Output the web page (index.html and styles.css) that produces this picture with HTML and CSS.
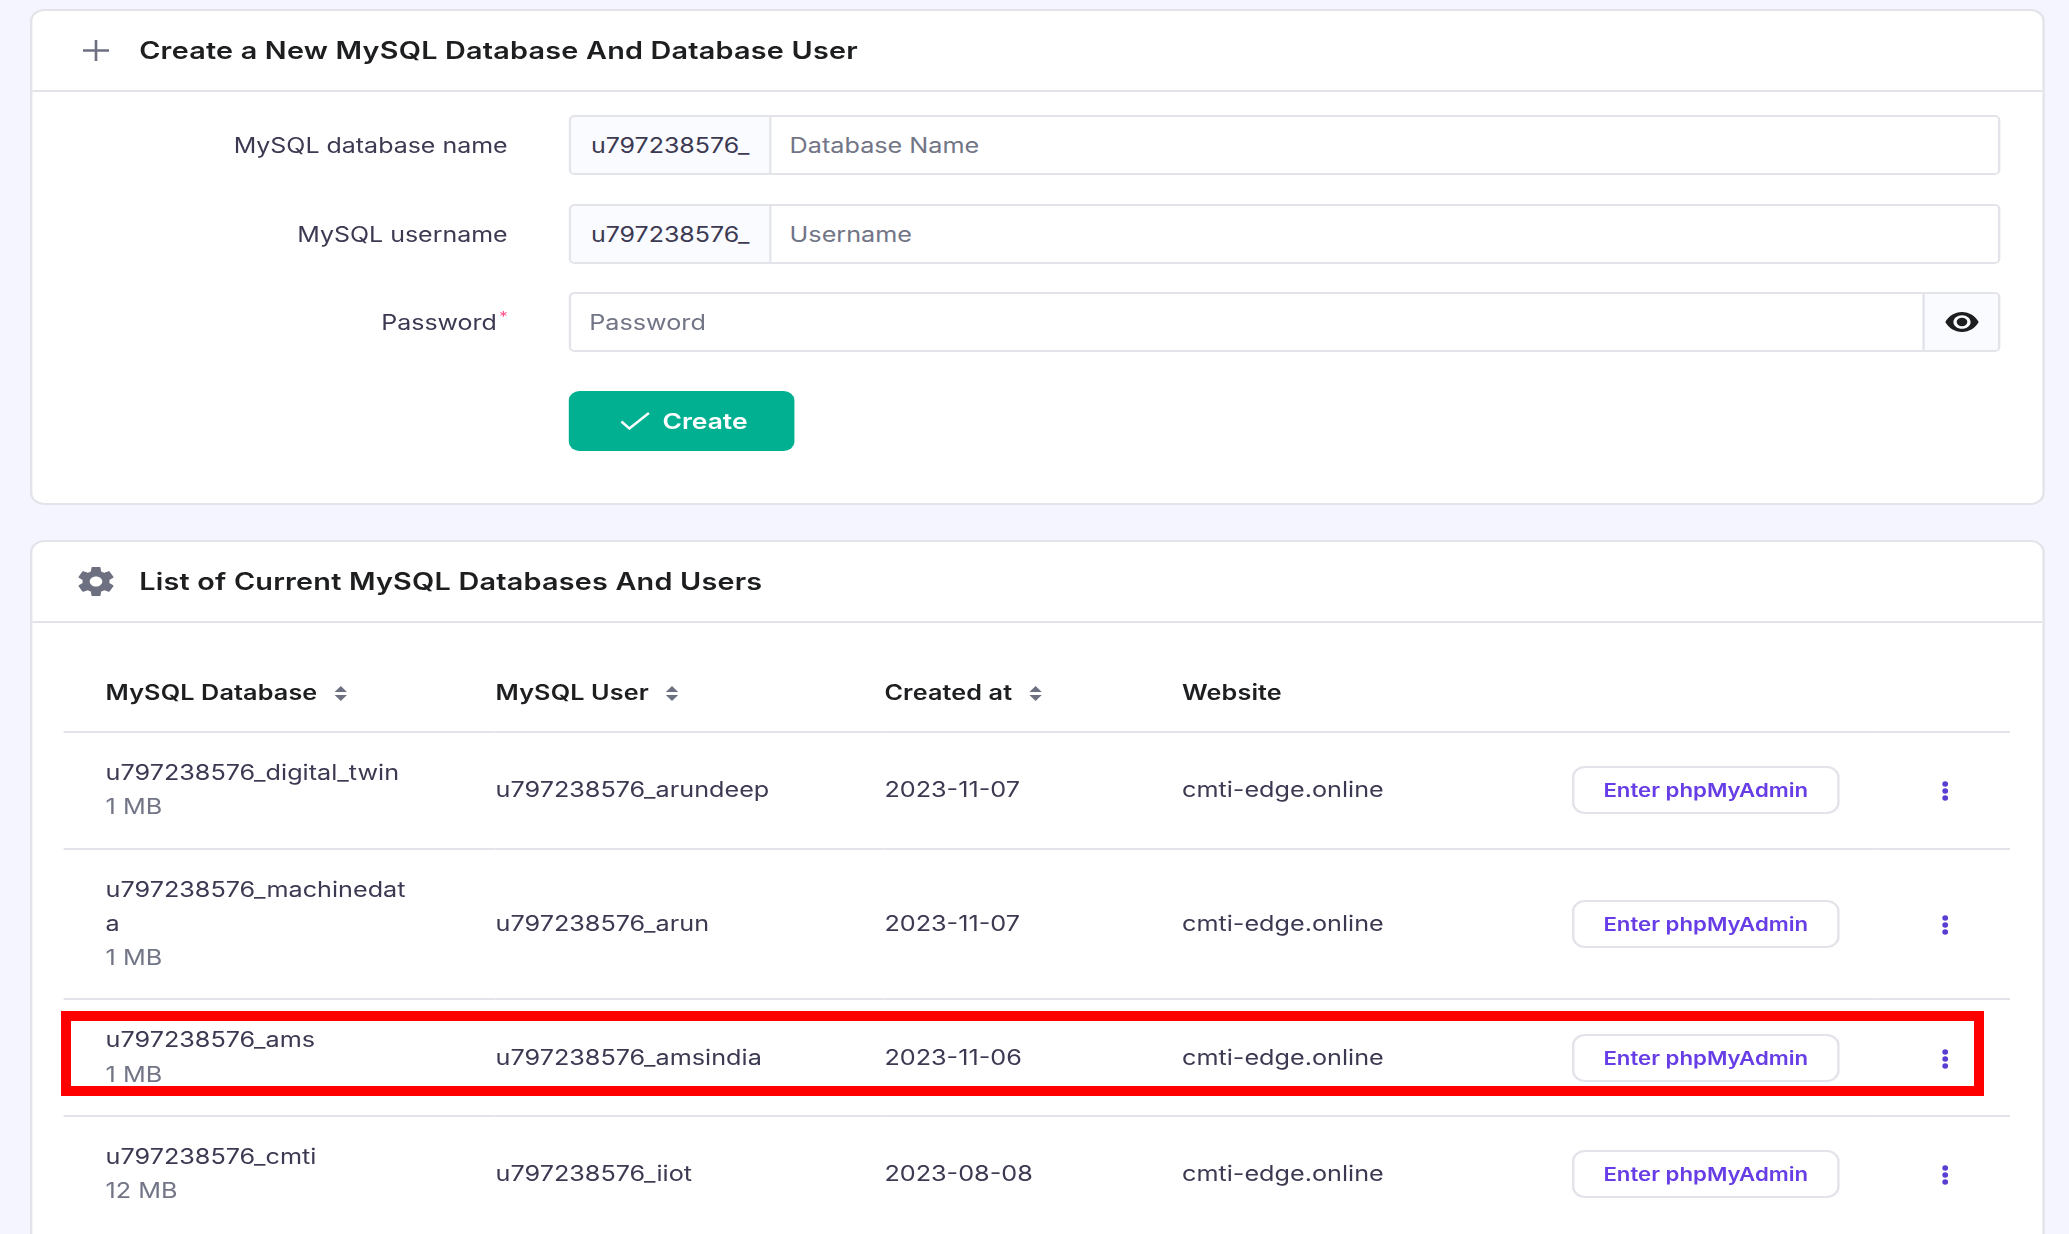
FILE: index.html
```html
<!DOCTYPE html>
<html lang="en">
<head>
    <meta charset="UTF-8">
    <title>MySQL Databases</title>
    <link rel="stylesheet" href="styles.css">
</head>
<body>
    <div class="page">
        <section class="card card-create">
            <header class="card-head">
                <span class="head-icon">
                    <svg width="22" height="21" viewBox="0 0 26 21" preserveAspectRatio="none"><path d="M0 10.5h26M13 0v21" stroke="#6d7081" stroke-width="2.6" fill="none"/></svg>
                </span>
                <h2>Create a New MySQL Database And Database User</h2>
            </header>
            <div class="form">
                <div class="form-row">
                    <label>MySQL database name</label>
                    <div class="field">
                        <span class="addon">u797238576_</span>
                        <input type="text" placeholder="Database Name">
                    </div>
                </div>
                <div class="form-row form-row-tight">
                    <label>MySQL username</label>
                    <div class="field">
                        <span class="addon">u797238576_</span>
                        <input type="text" placeholder="Username">
                    </div>
                </div>
                <div class="form-row">
                    <label>Password<sup>*</sup></label>
                    <div class="field">
                        <input type="text" placeholder="Password">
                        <span class="addon addon-eye">
                            <svg width="28" height="20" viewBox="0 0 34 20" preserveAspectRatio="none"><path fill-rule="evenodd" fill="#1d1e20" d="M17 0C9.500 0 3.500 4.200 0 10c3.500 5.800 9.500 10 17 10s13.500-4.200 17-10C30.500 4.200 24.500 0 17 0zm0 3.200c4.800 0 8.700 3 8.700 6.800s-3.900 6.800-8.700 6.800-8.700-3-8.700-6.800 3.900-6.800 8.700-6.800z"/><ellipse cx="17" cy="10" rx="5.400" ry="4.200" fill="#1d1e20"/></svg>
                        </span>
                    </div>
                </div>
                <div class="form-row form-actions">
                    <button class="btn-create">
                        <svg width="25" height="18" viewBox="0 0 30 18" preserveAspectRatio="none"><path d="M1 9.500l8 7L28.500 1" stroke="#fff" stroke-width="2.400" fill="none"/></svg>
                        Create
                    </button>
                </div>
            </div>
        </section>

        <section class="card card-list">
            <header class="card-head">
                <span class="head-icon">
                    <svg width="36" height="35" viewBox="0 0 24 24" preserveAspectRatio="none"><path fill="#6d7081" d="M19.430 12.980c.04-.32.07-.64.07-.98s-.03-.66-.07-.98l2.110-1.650c.19-.15.240-.42.120-.64l-2-3.460c-.12-.22-.39-.3-.61-.22l-2.490 1c-.52-.4-1.080-.73-1.690-.98l-.38-2.650C14.460 2.180 14.250 2 14 2h-4c-.25 0-.46.18-.49.42l-.38 2.650c-.61.25-1.170.59-1.690.98l-2.490-1c-.23-.09-.49 0-.61.22l-2 3.460c-.13.22-.07.49.12.64l2.110 1.650c-.04.32-.07.65-.07.98s.03.66.07.98l-2.110 1.650c-.19.15-.24.42-.12.64l2 3.460c.12.22.39.3.61.22l2.490-1c.52.4 1.080.73 1.690.98l.38 2.650c.03.24.24.42.49.42h4c.25 0 .46-.18.49-.42l.38-2.650c.61-.25 1.170-.59 1.690-.98l2.490 1c.23.09.49 0 .61-.22l2-3.460c.12-.22.07-.49-.12-.64l-2.110-1.650zM12 15.500c-1.930 0-3.500-1.570-3.500-3.500s1.570-3.500 3.500-3.500 3.500 1.570 3.500 3.500-1.570 3.500-3.500 3.500z"/></svg>
                </span>
                <h2>List of Current MySQL Databases And Users</h2>
            </header>
            <div class="table-wrap">
                <table>
                    <thead>
                        <tr>
                            <th>MySQL Database <svg class="sort" width="12" height="15" viewBox="0 0 14 15" preserveAspectRatio="none"><path d="M7 0l6 6H1zM7 15L1 9h12z" fill="#6d7081"/></svg></th>
                            <th>MySQL User <svg class="sort" width="12" height="15" viewBox="0 0 14 15" preserveAspectRatio="none"><path d="M7 0l6 6H1zM7 15L1 9h12z" fill="#6d7081"/></svg></th>
                            <th>Created at <svg class="sort" width="12" height="15" viewBox="0 0 14 15" preserveAspectRatio="none"><path d="M7 0l6 6H1zM7 15L1 9h12z" fill="#6d7081"/></svg></th>
                            <th>Website</th>
                            <th></th>
                            <th></th>
                        </tr>
                    </thead>
                    <tbody>
                        <tr>
                            <td>u797238576_digital_twin<div class="size">1 MB</div></td>
                            <td>u797238576_arundeep</td>
                            <td>2023-11-07</td>
                            <td>cmti-edge.online</td>
                            <td><button class="btn-pma">Enter phpMyAdmin</button></td>
                            <td class="more"><svg width="6" height="20" viewBox="0 0 7 20" preserveAspectRatio="none"><circle cx="3.500" cy="3" r="2.800"/><circle cx="3.500" cy="10" r="2.800"/><circle cx="3.500" cy="17" r="2.800"/></svg></td>
                        </tr>
                        <tr>
                            <td>u797238576_machinedat<br>a<div class="size">1 MB</div></td>
                            <td>u797238576_arun</td>
                            <td>2023-11-07</td>
                            <td>cmti-edge.online</td>
                            <td><button class="btn-pma">Enter phpMyAdmin</button></td>
                            <td class="more"><svg width="6" height="20" viewBox="0 0 7 20" preserveAspectRatio="none"><circle cx="3.500" cy="3" r="2.800"/><circle cx="3.500" cy="10" r="2.800"/><circle cx="3.500" cy="17" r="2.800"/></svg></td>
                        </tr>
                        <tr>
                            <td>u797238576_ams<div class="size">1 MB</div></td>
                            <td>u797238576_amsindia</td>
                            <td>2023-11-06</td>
                            <td>cmti-edge.online</td>
                            <td><button class="btn-pma">Enter phpMyAdmin</button></td>
                            <td class="more"><svg width="6" height="20" viewBox="0 0 7 20" preserveAspectRatio="none"><circle cx="3.500" cy="3" r="2.800"/><circle cx="3.500" cy="10" r="2.800"/><circle cx="3.500" cy="17" r="2.800"/></svg></td>
                        </tr>
                        <tr>
                            <td>u797238576_cmti<div class="size">12 MB</div></td>
                            <td>u797238576_iiot</td>
                            <td>2023-08-08</td>
                            <td>cmti-edge.online</td>
                            <td><button class="btn-pma">Enter phpMyAdmin</button></td>
                            <td class="more"><svg width="6" height="20" viewBox="0 0 7 20" preserveAspectRatio="none"><circle cx="3.500" cy="3" r="2.800"/><circle cx="3.500" cy="10" r="2.800"/><circle cx="3.500" cy="17" r="2.800"/></svg></td>
                        </tr>
                    </tbody>
                </table>
            </div>
        </section>
    </div>

    <div class="highlight"></div>
</body>
</html>
```

FILE: styles.css
```css
html, body {
    height: 1234px;
    overflow: hidden;
}
body {
    margin: 0;
    background-color: #f4f5ff;
    font-family: Inter, "Liberation Sans", sans-serif;
    font-size: 21px;
    color: #3c3a52;
}
/* the screenshot is stretched sideways, so the whole page is too */
.page {
    box-sizing: border-box;
    width: 1724px;
    height: 1234px;
    padding: 9px 20px 0 25px;
    overflow: hidden;
    transform: scaleX(1.2);
    transform-origin: 0 0;
}
.card {
    background-color: #fff;
    border: 2px solid #e3e4ea;
    border-radius: 12px;
}
.card-create {
    height: 496px;
    box-sizing: border-box;
    margin-bottom: 35px;
}
.card-list {
    height: 800px;
}
.card-head {
    display: flex;
    align-items: center;
    height: 79px;
    padding-left: 38px;
    border-bottom: 2px solid #e3e4ea;
}
.head-icon {
    width: 30px;
    display: flex;
    justify-content: center;
    margin-right: 21px;
}
.head-icon svg {
    flex-shrink: 0;
}
.card-head h2 {
    margin: 0;
    font-size: 24px;
    font-weight: 600;
    letter-spacing: 0.17px;
    color: #1d1e20;
}
.form {
    padding-top: 23px;
}
.form-row {
    display: flex;
    align-items: center;
    margin-bottom: 29px;
}
.form-row-tight {
    margin-bottom: 28px;
}
.form-row label {
    width: 396px;
    margin-right: 51px;
    font-size: 20.8px;
    text-align: right;
    flex-shrink: 0;
}
.form-row sup {
    color: #fc5185;
    font-size: 14px;
    margin-left: 2px;
    line-height: 0;
}
.field {
    display: flex;
    width: 1193px;
    height: 60px;
    box-sizing: border-box;
    border: 2px solid #e3e4ea;
    border-radius: 5px;
    overflow: hidden;
}
.addon {
    display: flex;
    align-items: center;
    justify-content: center;
    width: 165px;
    flex-shrink: 0;
    font-size: 20.8px;
    background-color: #fafbff;
    border-right: 2px solid #e3e4ea;
}
.addon-eye {
    width: 61px;
    border-right: 0;
    border-left: 2px solid #e3e4ea;
}
.field input {
    flex-grow: 1;
    min-width: 0;
    border: 0;
    outline: 0;
    padding: 0 15px;
    font-family: inherit;
    font-size: 21px;
    color: #3c3a52;
}
.field input::placeholder {
    color: #727586;
    opacity: 1;
}
.form-actions {
    margin: 39px 0 0 447px;
}
.btn-create {
    display: flex;
    align-items: center;
    justify-content: center;
    gap: 10px;
    width: 188px;
    height: 60px;
    padding: 0 0 0 4px;
    border: 0;
    border-radius: 9px;
    background-color: #00b090;
    color: #fff;
    font-family: inherit;
    font-size: 22px;
    font-weight: 600;
}
.table-wrap {
    padding: 31px 27px 0 26px;
}
table {
    width: 1622px;
    table-layout: fixed;
    border-collapse: collapse;
}
th:nth-child(1) { width: 360px; }
th:nth-child(2) { width: 324px; }
th:nth-child(3) { width: 248px; }
th:nth-child(4) { width: 325px; }
th:nth-child(5) { width: 256px; }
th {
    box-sizing: border-box;
    height: 78px;
    padding: 0;
    text-align: left;
    font-weight: 600;
    letter-spacing: 0.1px;
    color: #1d1e20;
    border-bottom: 2px solid #e3e4ea;
}
th:first-child, td:first-child {
    padding-left: 35px;
}
td {
    padding: 23px 0;
    line-height: 34.3px;
    border-bottom: 2px solid #e3e4ea;
}
tbody tr:last-child td {
    border-bottom: 0;
}
.sort {
    margin-left: 8px;
    vertical-align: -1px;
}
.size {
    color: #727586;
}
.btn-pma {
    display: block;
    width: 223px;
    height: 48px;
    background-color: #fff;
    border: 2px solid #e3e4ea;
    border-radius: 11px;
    color: #673de6;
    font-family: inherit;
    font-size: 18.5px;
    font-weight: 600;
}
.more {
    text-align: center;
}
.more svg {
    fill: #5a3dd1;
    vertical-align: middle;
}
/* red annotation box over the third row */
.highlight {
    position: absolute;
    left: 61px;
    top: 1011px;
    width: 1923px;
    height: 85px;
    box-sizing: border-box;
    border: 10px solid #ff0000;
}
```
